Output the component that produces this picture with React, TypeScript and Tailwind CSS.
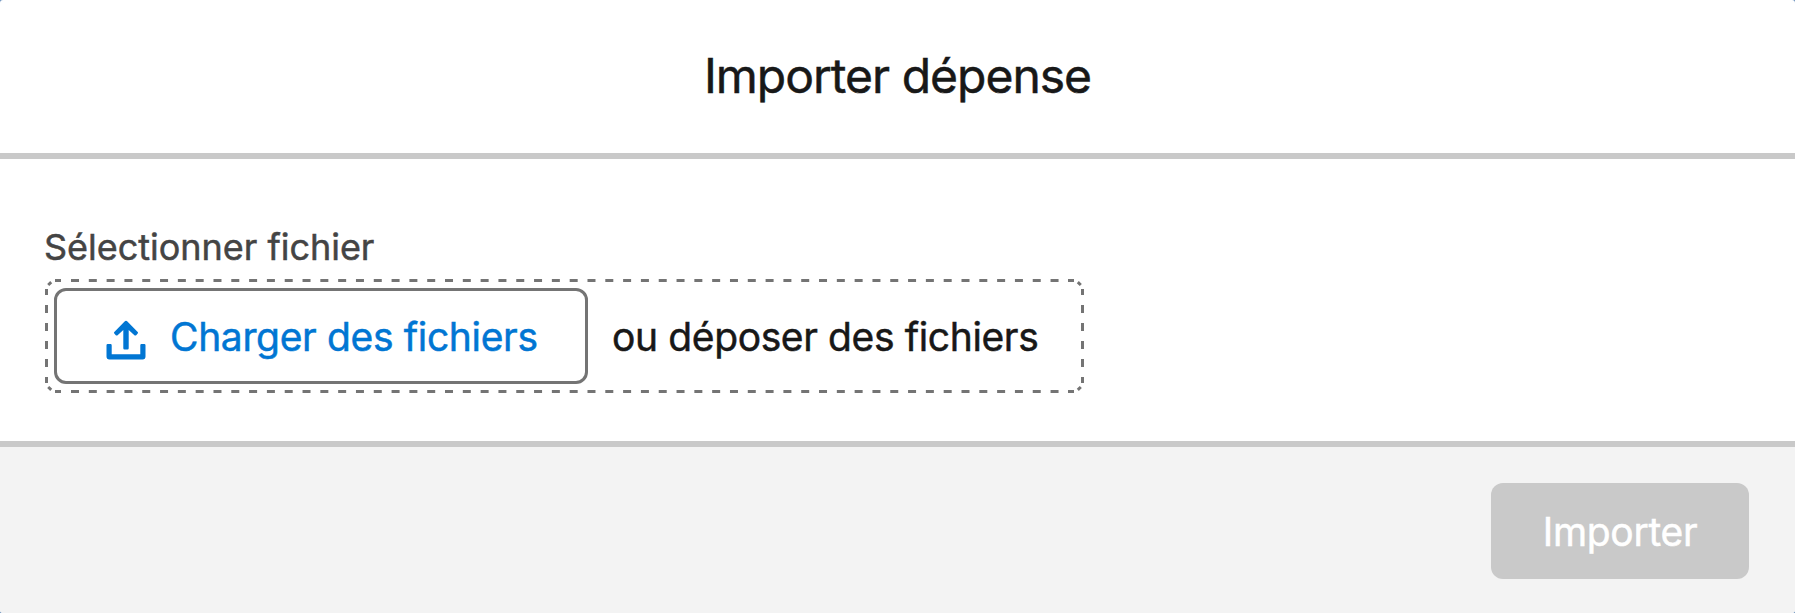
import React from 'react';

const UploadIcon: React.FC = () => (
  <svg width="40" height="40" viewBox="0 0 40 40" fill="none" className="shrink-0" aria-hidden="true">
    <path
      d="M18.6 1.4Q20 0.2 21.4 1.4L31.7 11.9Q32.5 12.8 31.7 13.6L30.2 15.2Q29.3 16 28.4 15.2L22.7 9.9V28.2Q22.7 29.4 21.5 29.4H18.5Q17.3 29.4 17.3 28.2V9.9L11.6 15.2Q10.7 16 9.8 15.2L8.3 13.6Q7.5 12.8 8.3 11.9Z"
      fill="currentColor"
    />
    <path
      d="M0.5 25.2Q0.5 24 1.7 24H4.5Q5.7 24 5.7 25.2V34.2H34.3V25.2Q34.3 24 35.5 24H38.3Q39.5 24 39.5 25.2V36.6Q39.5 39.5 36.6 39.5H3.4Q0.5 39.5 0.5 36.6Z"
      fill="currentColor"
    />
  </svg>
);

// Dashed outline of the drop area, each corner carries its own short dash
const DashedOutline: React.FC = () => (
  <svg
    viewBox="0 0 1039 114"
    fill="none"
    stroke="#747474"
    strokeWidth="3"
    className="pointer-events-none absolute inset-0 h-full w-full"
    aria-hidden="true"
  >
    <path d="M10 1.5H16M10 112.5H16M1023 1.5H1029M1023 112.5H1029" />
    <path d="M26 1.5H1014M26 112.5H1014" strokeDasharray="8 9.81" />
    <path d="M1.5 10V16M1.5 98V104M1037.5 10V16M1037.5 98V104" />
    <path d="M1.5 26V92M1037.5 26V92" strokeDasharray="8 10" />
    <path d="M3.2 6 6.2 3.2M1032.8 3.2 1035.8 6M3.2 108 6.2 110.8M1032.8 110.8 1035.8 108" />
  </svg>
);

interface FileUploadProps {
  label: string;
}

const FileUpload: React.FC<FileUploadProps> = ({ label }) => (
  <div className="flex flex-col items-start">
    <label className="-ml-px text-[36px] leading-[54px] tracking-[-0.02px] text-[#444444]">{label}</label>
    <div className="relative mt-[5px] flex h-[114px] w-[1039px] items-center rounded-xl pl-[9px]">
      <DashedOutline />
      <button
        type="button"
        className="flex h-24 w-[534px] items-center rounded-xl border-3 border-[#747474] bg-white pl-[49px] text-[39px] whitespace-nowrap text-[#0176d3]"
      >
        <span className="mt-[7px]">
          <UploadIcon />
        </span>
        <span className="ml-6 pt-0.5 tracking-[-0.35px]">Charger des fichiers</span>
      </button>
      <span className="ml-6 pt-0.5 text-[39px] tracking-[-0.38px] whitespace-nowrap text-[#181818]">
        ou déposer des fichiers
      </span>
    </div>
  </div>
);

export default function App() {
  return (
    <div className="h-[613px] w-full bg-[#6c91bd]">
      <div className="flex h-full flex-col overflow-hidden rounded-[3px] bg-white font-['Inter',sans-serif] font-normal [-webkit-text-stroke:0.5px]">
        <header className="flex h-[159px] items-center justify-center border-b-6 border-[#c9c9c9] pb-0.5">
          <h2 className="text-[48px] leading-[60px] tracking-[-1px] text-[#181818]">Importer dépense</h2>
        </header>

        <main className="h-[282px] px-[45px] pt-[61px]">
          <FileUpload label="Sélectionner fichier" />
        </main>

        <footer className="flex flex-1 items-start justify-end border-t-6 border-[#c9c9c9] bg-[#f3f3f3] pt-9 pr-[46px]">
          <button
            type="button"
            disabled
            className="flex h-24 w-[258px] items-center justify-center rounded-xl bg-[#c9c9c9] pt-0.5 text-[39px] tracking-[-0.3px] text-white"
          >
            Importer
          </button>
        </footer>
      </div>
    </div>
  );
}
